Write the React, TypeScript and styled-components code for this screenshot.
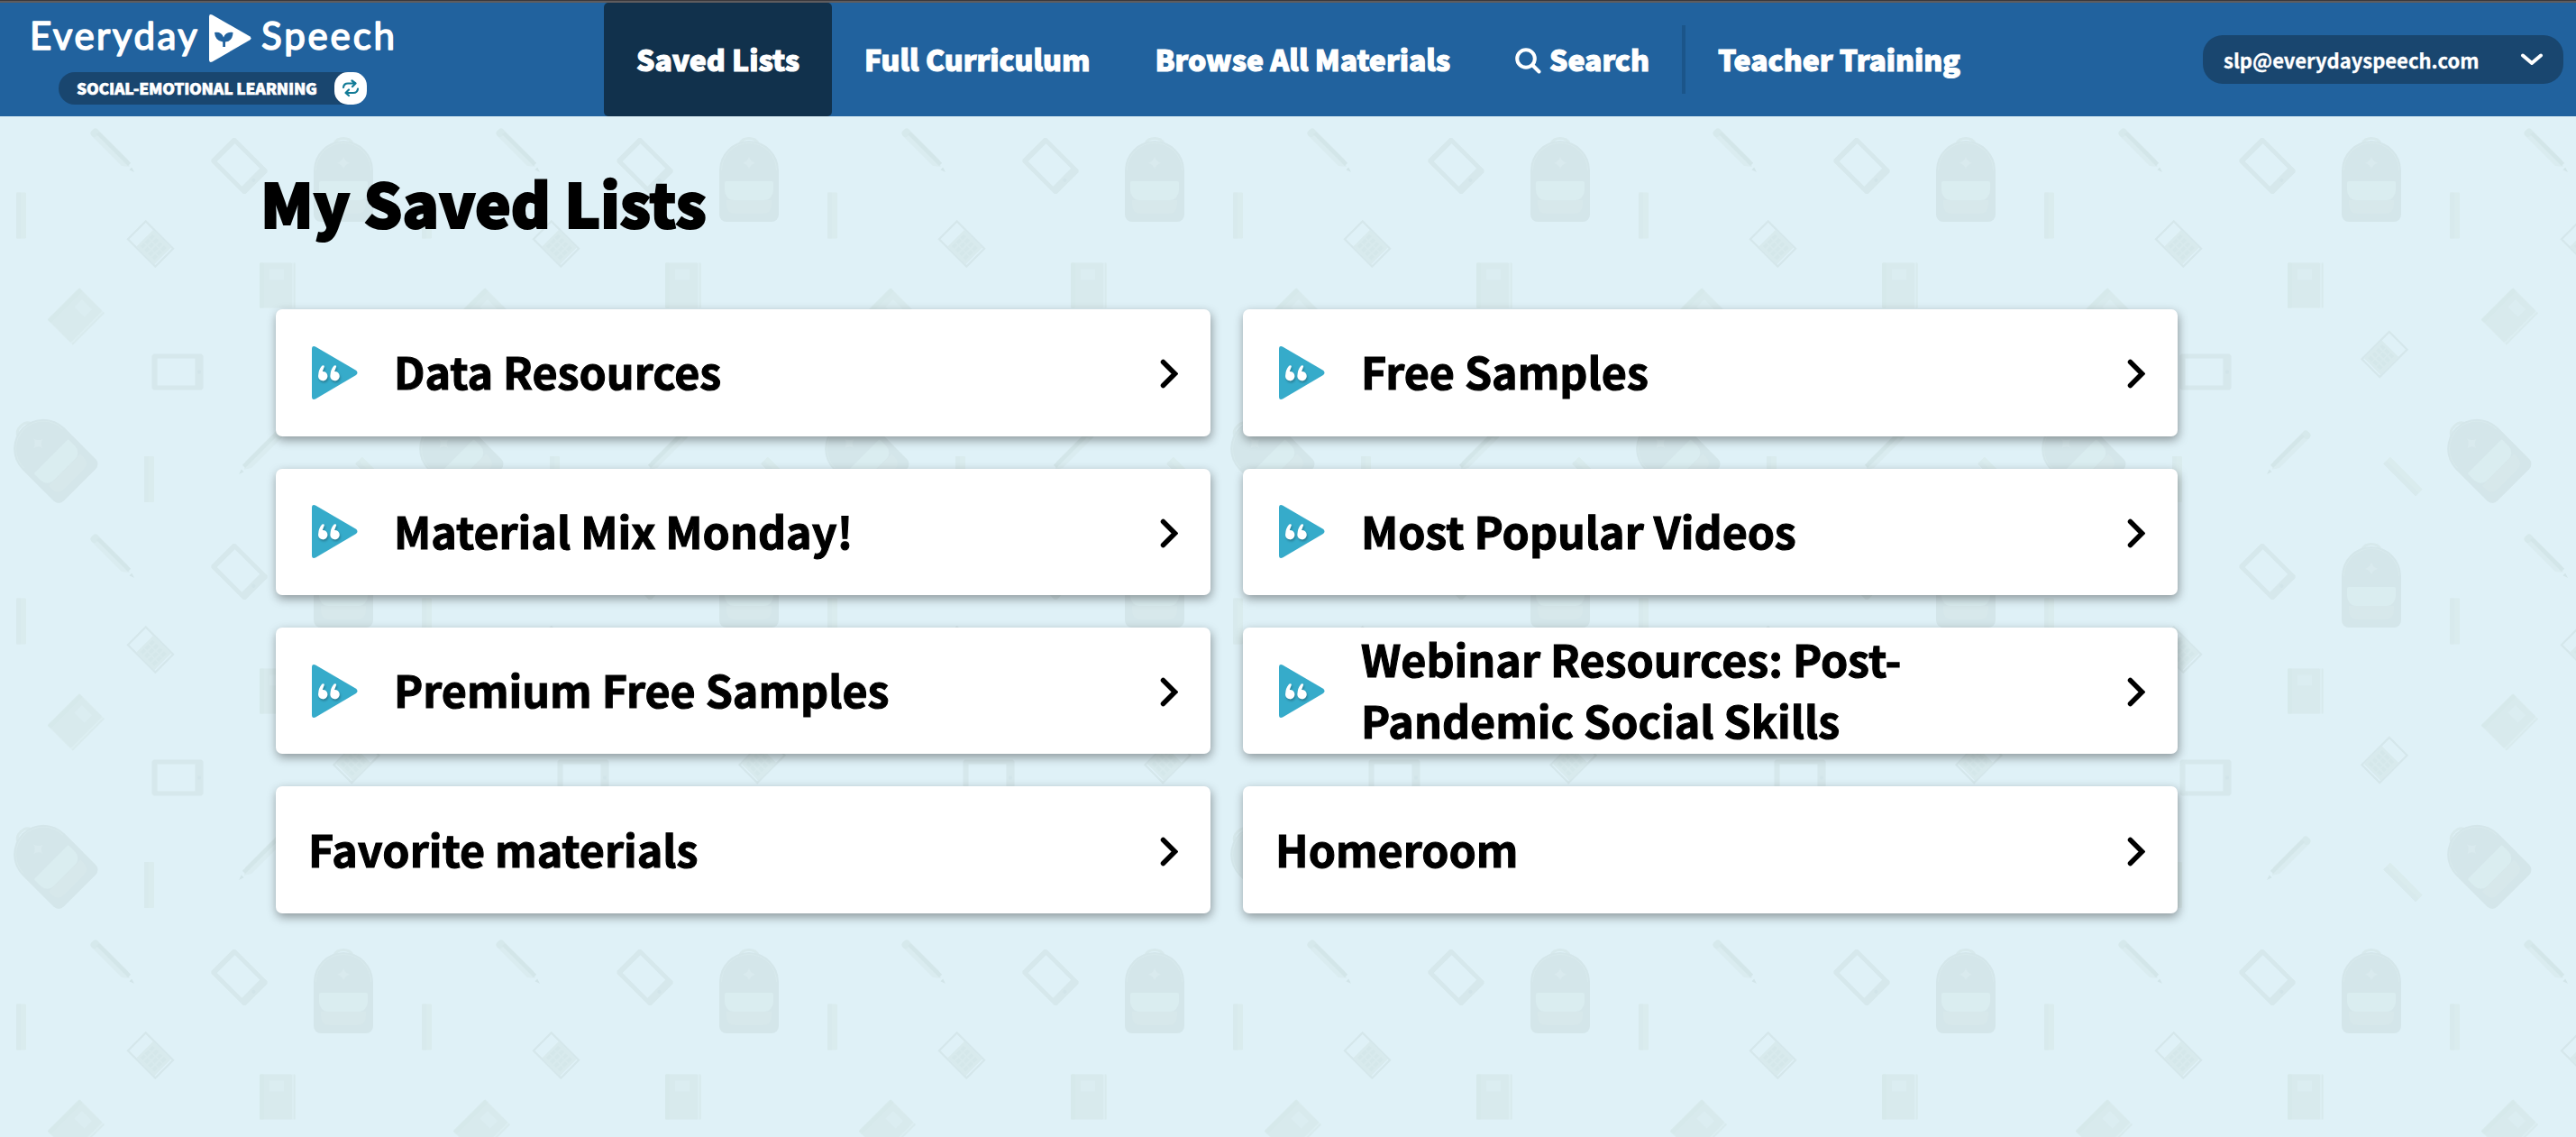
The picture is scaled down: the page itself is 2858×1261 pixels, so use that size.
import React from 'react';
import styled, { createGlobalStyle } from 'styled-components';

interface SavedList {
  title: string;
  official?: boolean;
}

interface NavEntry {
  label: string;
  active?: boolean;
  search?: boolean;
}

const savedLists: SavedList[] = [
  { title: 'Data Resources', official: true },
  { title: 'Free Samples', official: true },
  { title: 'Material Mix Monday!', official: true },
  { title: 'Most Popular Videos', official: true },
  { title: 'Premium Free Samples', official: true },
  { title: 'Webinar Resources: Post-Pandemic Social Skills', official: true },
  { title: 'Favorite materials' },
  { title: 'Homeroom' },
];

const navEntries: NavEntry[] = [
  { label: 'Saved Lists', active: true },
  { label: 'Full Curriculum' },
  { label: 'Browse All Materials' },
  { label: 'Search', search: true },
];

const Backpack: React.FC<{ transform: string }> = ({ transform }) => (
  <g transform={transform}>
    <path d="M-10 -39a10.500 8 0 0 1 20 0" fill="none" stroke="#d7e9ec" strokeWidth="3" />
    <path d="M-33 -9a33 33 0 0 1 66 0V40a8 8 0 0 1 -8 8h-50a8 8 0 0 1 -8 -8z" fill="#d4e6ea" />
    <path d="M-30.500 -9a30.500 30.500 0 0 1 61 0" fill="none" stroke="#d8eaed" strokeWidth="1" />
    <path d="M-27 4.500q0 -1.500 1.500 -1.500h51q1.500 0 1.500 1.500v8.500a10 11 0 0 1 -10 11h-34a10 11 0 0 1 -10 -11z" fill="#daedf0" />
    <path d="M-25 24h50v5q0 10 -10 10h-30q-10 0 -10 -10z" fill="#d7e8eb" />
    <path d="M0 -25q1 5.500 7 8q-6 1.500 -7 7q-1 -5.500 -7 -7q6 -2.500 7 -8z" fill="#d9eaee" />
  </g>
);

const Tablet: React.FC<{ transform: string; w: number; h: number }> = ({ transform, w, h }) => (
  <g transform={transform}>
    <path
      fillRule="evenodd"
      fill="#d6e8ec"
      d={`M${-w / 2 + 2} ${-h / 2}H${w / 2 - 2}l2 2V${h / 2 - 2}l-2 2H${-w / 2 + 2}l-2 -2V${-h / 2 + 2}zM${-w / 2 + 6} ${-h / 2 + 5}V${h / 2 - 5}H${w / 2 - 9}V${-h / 2 + 5}z`}
    />
    <circle cx={w / 2 - 4.5} cy="0" r="2" fill="#d1e4e9" />
  </g>
);

const Calculator: React.FC<{ transform: string; mirror?: boolean }> = ({ transform, mirror }) => (
  <g transform={`${transform}${mirror ? ' scale(1 -1)' : ''}`}>
    <rect x="-21.500" y="-14" width="43" height="28" fill="none" stroke="#d5e7eb" strokeWidth="2.200" />
    <rect x="-9" y="-13" width="28" height="26" fill="#d8eaed" />
    {[-6, 0, 6, 12].map((x) =>
      [-9, -2.2, 4.6].map((y) => (
        <rect key={`${x}:${y}`} x={x} y={y} width="3.500" height="5" fill="#d4e7ea" />
      ))
    )}
  </g>
);

const Book: React.FC<{ transform: string }> = ({ transform }) => (
  <g transform={transform}>
    <rect x="-20" y="-25" width="40" height="50" rx="1.500" fill="#dceef2" />
    <rect x="-20" y="-25" width="36" height="50" rx="1.500" fill="#d8eaed" />
    <rect x="-20" y="-25" width="5" height="50" rx="1" fill="#d6e9eb" />
    <rect x="18" y="-25" width="1.500" height="50" fill="#d8eaed" />
    <rect x="-9" y="-18" width="16" height="12" fill="#dbedf1" />
  </g>
);

const Pencil: React.FC<{ transform: string; flip?: boolean }> = ({ transform, flip }) => (
  <g transform={transform}>
    <path d="M-28 -5h47l7 4.500l-7 5.500h-47q-5 -5 0 -10z" fill="#daecf0" />
    <rect x="-32" y="-5" width="8" height="10" rx="4" fill="#d6e9ec" />
    <rect x="-25" y={flip ? 0 : -4.5} width="49" height="4.500" fill="#d3e6e9" />
    <path d="M28 -2l6 2l-6 2z" fill="#d2e5e9" />
  </g>
);

const Ruler: React.FC<{ transform: string }> = ({ transform }) => (
  <g transform={transform}>
    <rect x="-5.500" y="-25.500" width="11" height="51" rx="1" fill="#daecee" />
    <rect x="-5.500" y="-25.500" width="5" height="51" rx="1" fill="#d8eaed" />
  </g>
);

// School supplies wallpaper, one 450px tile repeated
const Wallpaper: React.FC = () => (
  <WallpaperSvg aria-hidden="true">
    <defs>
      <pattern id="supplies" width="450" height="450" patternUnits="userSpaceOnUse">
        <Backpack transform="translate(54.500 54) rotate(-45)" />
        <Pencil transform="translate(289 52) rotate(135)" flip />
        <Ruler transform="translate(165.500 81.500)" />
        <Ruler transform="translate(416 78.500) rotate(-45)" />
        <Pencil transform="translate(125 167) rotate(45)" />
        <Tablet transform="translate(265.500 184) rotate(45)" w={54} h={38} />
        <Backpack transform="translate(381 198)" />
        <Ruler transform="translate(23.500 239)" />
        <Calculator transform="translate(167 270.500) rotate(45)" />
        <Book transform="translate(308 316.500)" />
        <Book transform="translate(84.500 351) rotate(45)" />
        <Calculator transform="translate(395.500 393) rotate(-45) scale(-1 1)" mirror />
        <Tablet transform="translate(197 412.500)" w={57} h={40} />
      </pattern>
    </defs>
    <rect width="100%" height="100%" fill="url(#supplies)" />
  </WallpaperSvg>
);

const Logo: React.FC = () => (
  <svg width="440" height="76" viewBox="0 0 440 76" fill="#fff">
    <LogoText x="33" y="55" textLength="186">
      Everyday
    </LogoText>
    <path d="M232 18.500Q232 15 235.500 16.500L277 40.200Q280 42.500 277 44.500L235.500 68.500Q232 70 232 66.500z" />
    <path
      d="M238 36q8-1 10 5.500q2.500-6.500 10.500-5.500q-.3 9.500-8.500 10.500v5.500h-2.800v-5.500q-8.500-1-9.200-10.500z"
      fill="#21629e"
    />
    <LogoText x="290" y="55" textLength="148">
      Speech
    </LogoText>
  </svg>
);

const SwapIcon: React.FC = () => (
  <svg width="20" height="20" viewBox="0 0 20 20" fill="none" stroke="#127b96" strokeWidth="2.200" strokeLinecap="round" strokeLinejoin="round">
    <path d="M2 9q.5-4.500 5-4.500h8M11.500 1.500l4 3l-3.500 3.500" />
    <path d="M18 10.500q-.5 4.500 -5 4.500h-8M8 11.500l-3.500 3.500l3.500 3" />
  </svg>
);

const SearchIcon: React.FC = () => (
  <svg width="29" height="29" viewBox="0 0 29 29" fill="none" stroke="#fff" strokeWidth="4" strokeLinecap="round">
    <circle cx="12" cy="12" r="9.800" />
    <path d="M19.500 19.500l7 7" />
  </svg>
);

const QuoteIcon: React.FC = () => (
  <QuoteSvg width="51" height="59" viewBox="0 0 51 59">
    <path d="M0 3Q0 -1 4 .5L49 26.800Q52 29.500 49 32L4 58.500Q0 60 0 56z" fill="#36abca" />
    <path
      className="marks"
      fill="#fff"
      d="M12.500 21.300q2 .2 1 2.200l-1.700 4.500a5.200 5.200 0 1 1 -4.700 4.500q.3-6.500 4-10.700q.7-.6 1.400-.5zM25.800 21.300q2 .2 1 2.200l-1.700 4.500a5.200 5.200 0 1 1 -4.700 4.500q.3-6.500 4-10.700q.7-.6 1.400-.5z"
    />
  </QuoteSvg>
);

const App: React.FC = () => {
  return (
    <Page>
      <GlobalStyle />
      <Wallpaper />
      <Header>
        <Brand>
          <Logo />
          <ProductSwitch>
            Social-Emotional Learning
            <SwapBadge>
              <SwapIcon />
            </SwapBadge>
          </ProductSwitch>
        </Brand>
        <Nav>
          {navEntries.map((entry) => (
            <NavItem key={entry.label} $active={entry.active}>
              {entry.search && <SearchIcon />}
              {entry.label}
            </NavItem>
          ))}
          <Divider />
          <NavItem>Teacher Training</NavItem>
        </Nav>
        <Account>
          slp@everydayspeech.com
          <svg width="26" height="14" viewBox="0 0 26 14" fill="none" stroke="#fff" strokeWidth="4" strokeLinecap="round" strokeLinejoin="round">
            <path d="M3 2.500l10 8.500l10 -8.500" />
          </svg>
        </Account>
      </Header>
      <Main>
        <Title>My Saved Lists</Title>
        <Lists>
          {savedLists.map((list) => (
            <Card key={list.title}>
              {list.official && <QuoteIcon />}
              <CardTitle>{list.title}</CardTitle>
              <Chevron width="20" height="33" viewBox="0 0 20 33">
                <path d="M3.500 3.500l13 13l-13 13" />
              </Chevron>
            </Card>
          ))}
        </Lists>
      </Main>
    </Page>
  );
};

//styles
const GlobalStyle = createGlobalStyle`
  * {
    box-sizing: border-box;
  }
  body {
    margin: 0;
    background: #dff1f7;
    font-family: 'Noto Sans CJK JP', 'Noto Sans CJK SC', 'Open Sans', sans-serif;
  }
`;
const Page = styled.div`
  position: relative;
  height: 1261px;
  overflow: hidden;
`;
const WallpaperSvg = styled.svg`
  position: absolute;
  inset: 0;
  width: 100%;
  height: 100%;
`;
const Header = styled.header`
  position: relative;
  display: flex;
  height: 129px;
  padding-right: 14px;
  background: #21629e;
  border-top: 3px solid #5f5c5e;
  &::before {
    content: '';
    position: absolute;
    top: -3px;
    left: 0;
    right: 0;
    height: 1px;
    background: #3a383c;
  }
`;
const Brand = styled.div`
  width: 670px;
  display: flex;
  flex-direction: column;
  margin-top: -3px;
`;
const LogoText = styled.text`
  font-family: Lato, sans-serif;
  font-size: 42px;
  font-weight: 400;
  stroke: #fff;
  stroke-width: 1.6px;
  stroke-linejoin: round;
`;
const ProductSwitch = styled.div`
  display: flex;
  align-items: center;
  justify-content: space-between;
  width: 342px;
  height: 36px;
  margin: 4px 0 0 65px;
  padding-left: 20px;
  border-radius: 18px;
  background: #19466f;
  color: #fff;
  font-size: 17.5px;
  font-weight: 900;
  letter-spacing: -0.2px;
  line-height: 36px;
  white-space: nowrap;
  text-transform: uppercase;
  -webkit-text-stroke: 0.6px #fff;
`;
const SwapBadge = styled.span`
  display: flex;
  align-items: center;
  justify-content: center;
  width: 36px;
  height: 36px;
  border-radius: 15px;
  background: #fff;
`;
const Nav = styled.nav`
  display: flex;
  align-items: center;
`;
const NavItem = styled.a<{ $active?: boolean }>`
  display: flex;
  align-items: center;
  gap: 9px;
  height: 126px;
  padding: 0 36px 2px;
  border-radius: 5px;
  background: ${(p) => (p.$active ? '#11314c' : 'transparent')};
  color: #fff;
  font-size: 32px;
  font-weight: 900;
  letter-spacing: -0.05px;
  line-height: 48px;
  white-space: nowrap;
  -webkit-text-stroke: 1.1px #fff;
  > svg {
    margin-top: 4px;
  }
`;
const Divider = styled.span`
  width: 4px;
  height: 76px;
  background: #1b558a;
`;
const Account = styled.div`
  display: flex;
  align-items: center;
  justify-content: space-between;
  width: 400px;
  height: 54px;
  margin: 36px 0 0 auto;
  padding: 0 22px 0 23px;
  border-radius: 22px;
  background: #19466f;
  color: #fff;
  font-size: 22px;
  font-weight: 700;
  line-height: 54px;
  -webkit-text-stroke: 0.3px #fff;
  > svg {
    margin-bottom: 1px;
  }
`;
const Main = styled.main`
  position: relative;
  padding: 45px 0 0 288px;
`;
const Title = styled.h1`
  margin: 0 0 69.2px;
  padding-left: 1px;
  color: #000;
  font-size: 67px;
  font-weight: 900;
  line-height: 100px;
  -webkit-text-stroke: 2.2px #000;
`;
const Lists = styled.section`
  display: grid;
  grid-template-columns: 1037px 1037px;
  grid-auto-rows: 140.4px;
  gap: 36px;
  margin-left: 18px;
`;
const Card = styled.article`
  display: flex;
  align-items: center;
  padding: 0 36px;
  border-radius: 7px;
  background: #fff;
  box-shadow: 1px 4px 11px rgba(0, 0, 0, 0.38);
`;
const QuoteSvg = styled.svg`
  flex: none;
  margin: 0 40px 0 4px;
  overflow: visible;
  .marks {
    filter: drop-shadow(1px 2px 1px rgba(0, 0, 0, 0.25));
  }
`;
const CardTitle = styled.h2`
  flex: 1;
  margin: -4px 0 0;
  padding-right: 200px;
  color: #000;
  font-size: 48.4px;
  font-weight: 700;
  line-height: 68px;
  -webkit-text-stroke: 1.1px #000;
`;
const Chevron = styled.svg`
  flex: none;
  margin-top: 3px;
  fill: none;
  stroke: #000;
  stroke-width: 5.5px;
  stroke-linecap: round;
`;
export default App;
